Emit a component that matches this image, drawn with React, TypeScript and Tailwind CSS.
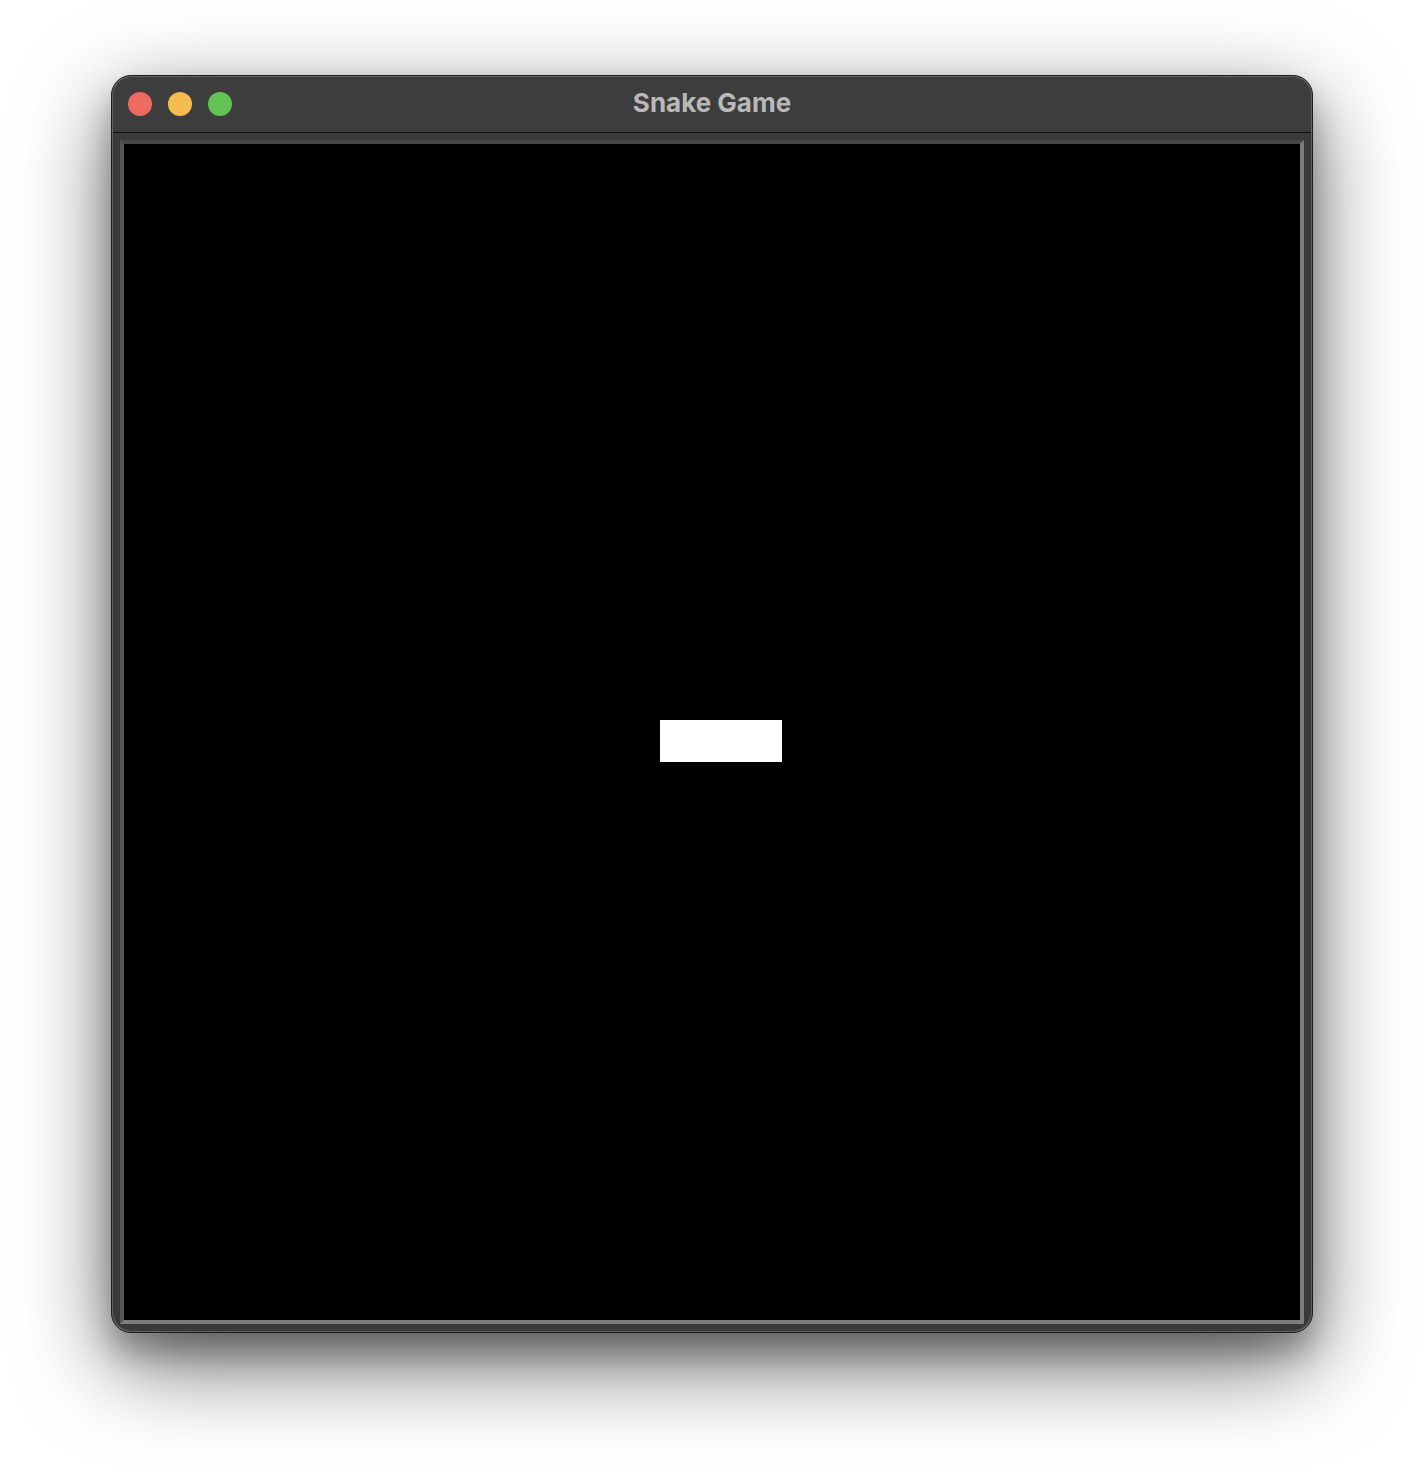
import React from 'react';

const Light: React.FC<{ color: string }> = ({ color }) => (
    <span className={`block w-6 h-6 rounded-full ${color}`} />
);

export default function App() {
    return (
        <div className="w-[1424px] h-[1480px] bg-white overflow-hidden pt-[75px] pl-[111px] font-['Inter','Liberation_Sans',sans-serif]">
            <div className="w-[1202px] h-[1258px] rounded-[20px] border border-[#1c1c1c] bg-[#626262] p-px shadow-[0_30px_90px_rgba(0,0,0,0.6),0_20px_30px_rgba(0,0,0,0.25)]">
                <div className="h-full rounded-[19px] bg-[#3a3a3a] flex flex-col overflow-hidden">
                    <div className="relative h-[56px] shrink-0 bg-[#3d3d3d] border-b border-[#141414] flex items-center pl-[15px] pb-px gap-4">
                        <Light color="bg-[#ee6a5f]" />
                        <Light color="bg-[#f5bd4f]" />
                        <Light color="bg-[#61c454]" />
                        <div className="absolute inset-0 flex items-center justify-center pb-1 text-[26px] leading-none font-bold text-[#b9b9b9]">Snake Game</div>
                    </div>
                    <div className="flex-1 pt-[7px] pl-[7px]">
                        <div className="w-[1184px] h-[1184px] border-4 border-t-[#484848] border-l-[#555555] border-r-[#7d7d7d] border-b-[#7d7d7d] bg-black flex flex-col">
                            <div className="h-[576px] shrink-0" />
                            <div className="ml-[536px] w-[122px] h-[42px] bg-white" />
                        </div>
                    </div>
                </div>
            </div>
        </div>
    );
}
